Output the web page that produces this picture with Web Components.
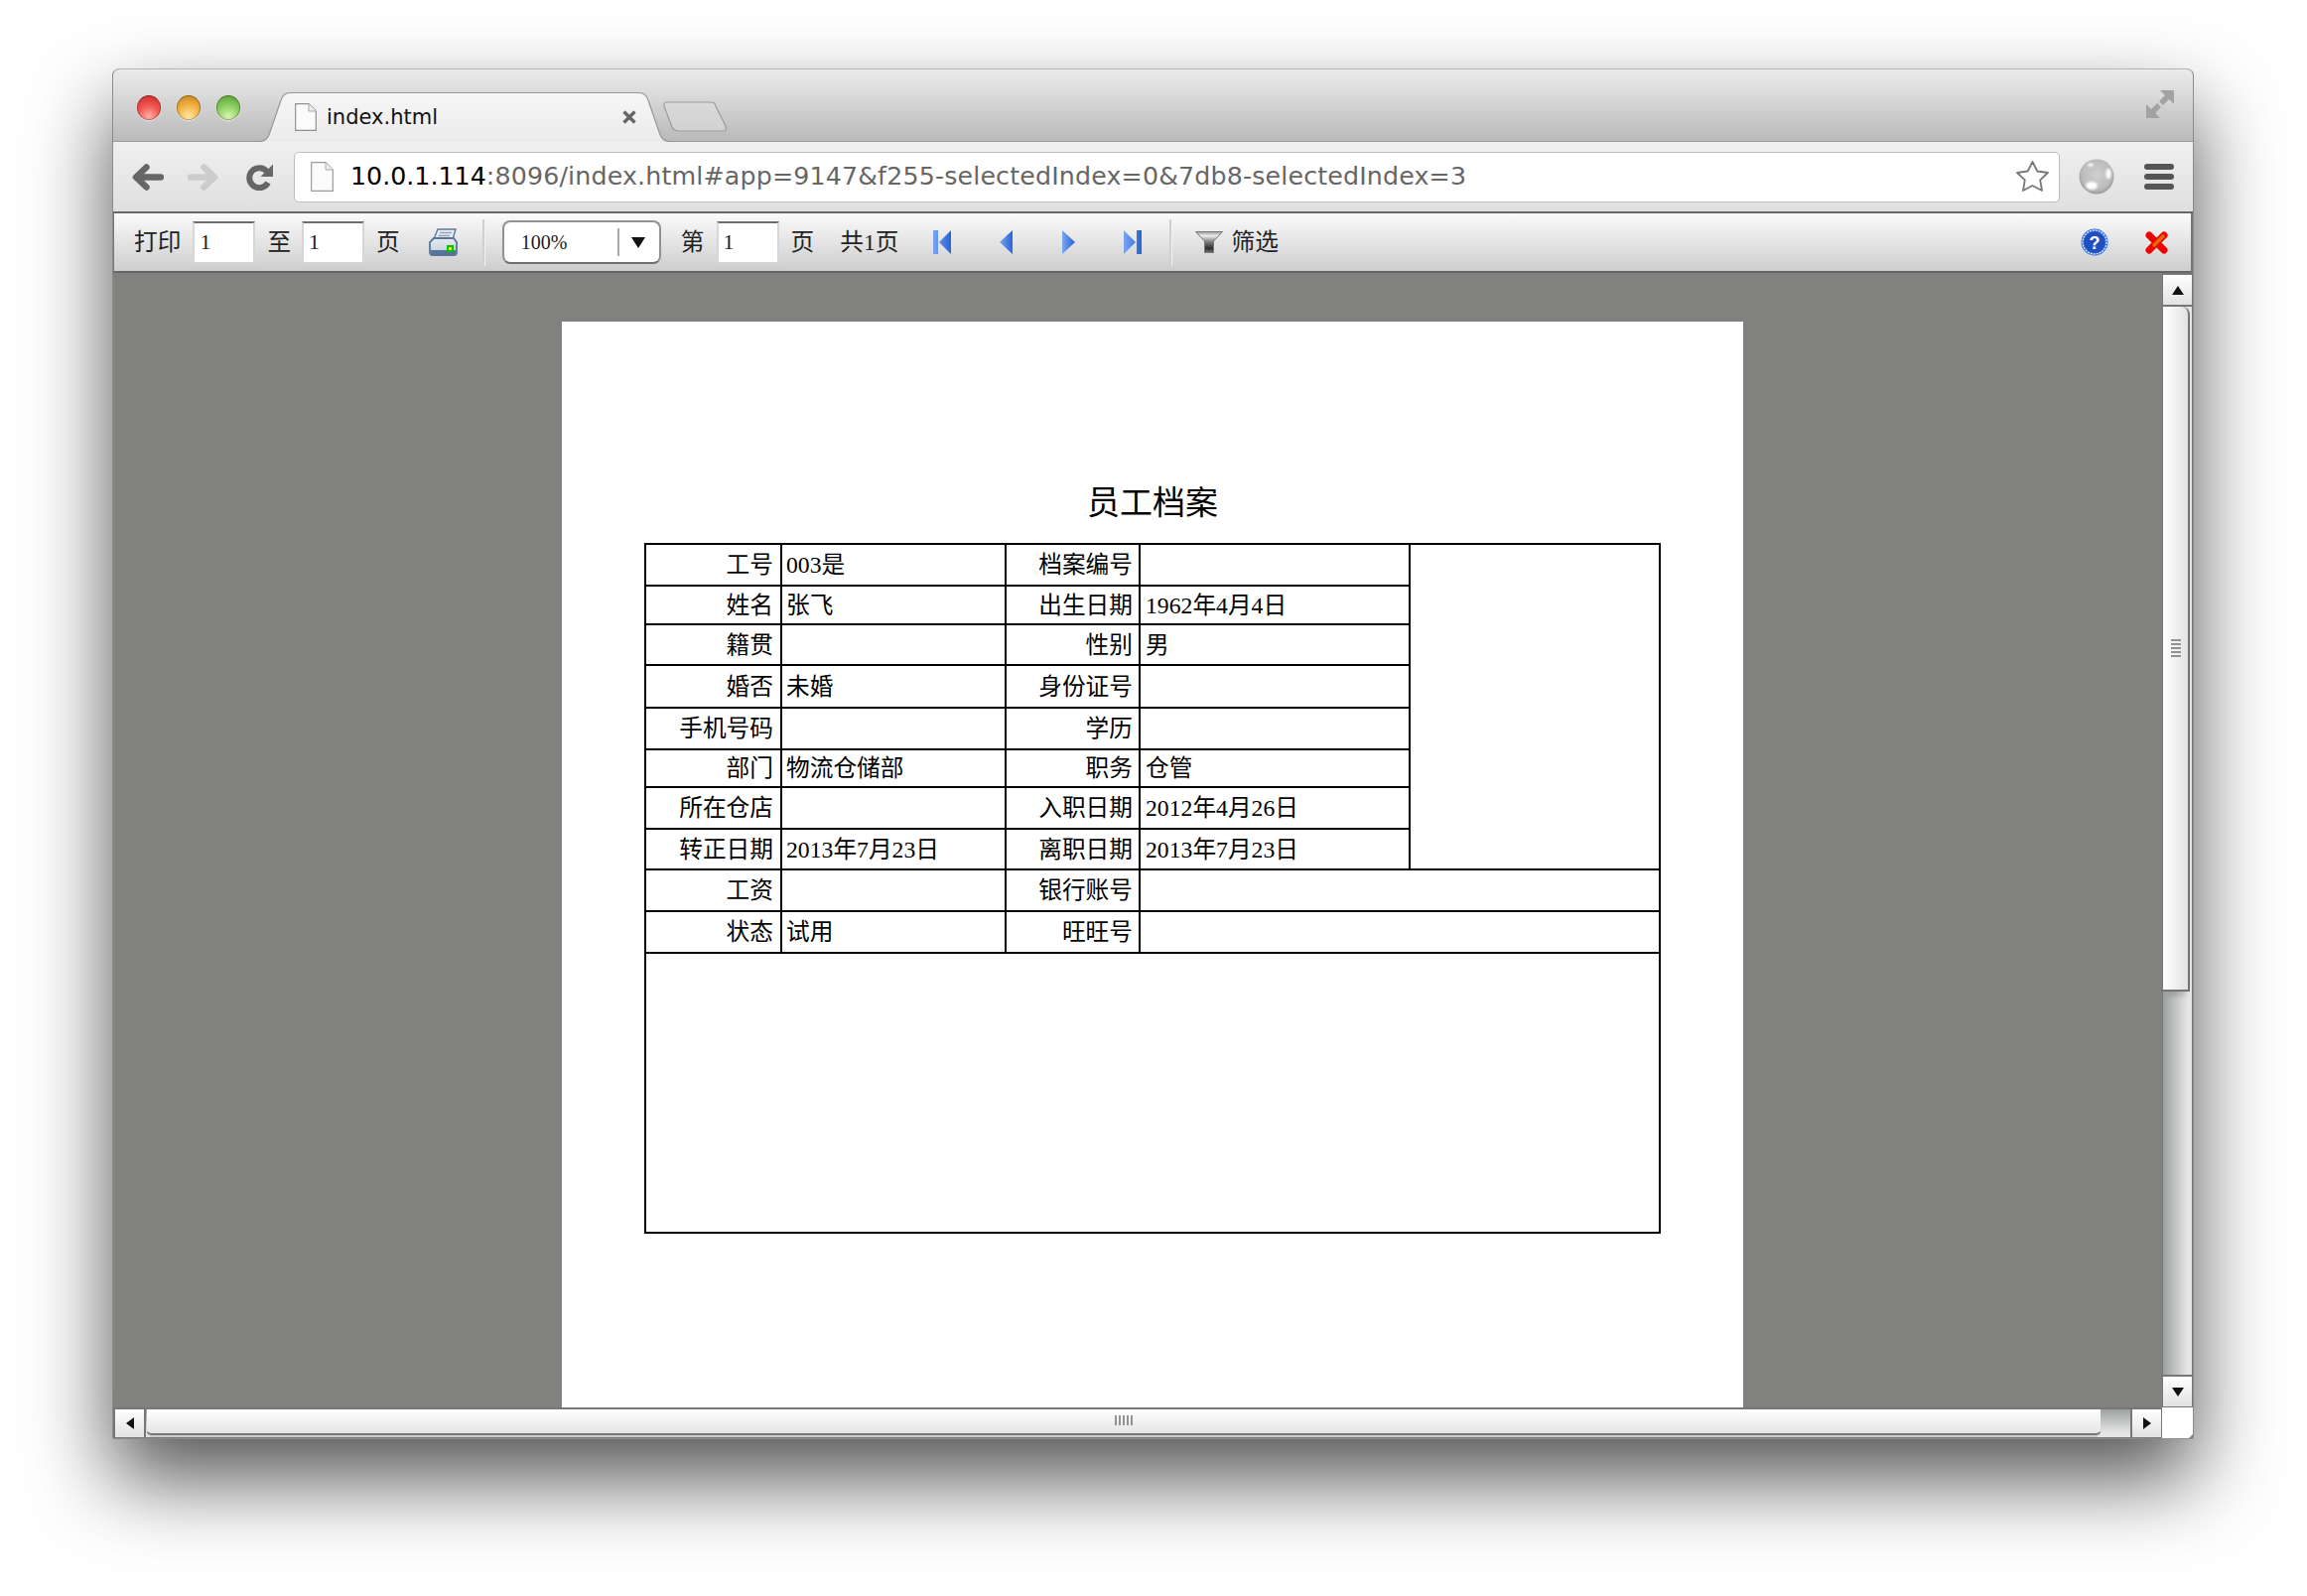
<!DOCTYPE html>
<html lang="zh">
<head>
<meta charset="utf-8">
<title>index.html</title>
<style>
    html, body {
        margin: 0;
        width: 2324px;
        height: 1608px;
        overflow: hidden;
        background: #fff;
    }
</style>
</head>
<body>
<browser-window>
    <tab-strip></tab-strip>
    <browser-bar></browser-bar>
    <report-bar></report-bar>
    <view-port>
        <report-page title-text="员工档案">
            <archive-table></archive-table>
        </report-page>
    </view-port>
</browser-window>

<script>
const SERIF_STACK = '"Liberation Serif", "Noto Sans CJK SC", serif';

class BrowserWindow extends HTMLElement {
    constructor() {
        super();
        this.attachShadow({ mode: 'open' });
        this.shadowRoot.innerHTML = `
            <style>
                :host {
                    display: flex;
                    flex-direction: column;
                    box-sizing: border-box;
                    width: 2097px;
                    height: 1381px;
                    margin: 69px 0 0 113px;
                    border: 1px solid #8c8c8c;
                    border-top-color: #b4b4b4;
                    border-radius: 7px 7px 3px 3px;
                    background: #777;
                    box-shadow: 0 40px 84px rgba(0, 0, 0, .68);
                    overflow: hidden;
                }
            </style>
            <slot></slot>
        `;
    }
}

class TabStrip extends HTMLElement {
    constructor() {
        super();
        this.attachShadow({ mode: 'open' });
        this.shadowRoot.innerHTML = `
            <style>
                :host {
                    display: flex;
                    align-items: flex-end;
                    flex: none;
                    height: 73px;
                    padding-left: 24px;
                    background: linear-gradient(#ebebeb, #b9b9b9);
                    box-shadow: inset 0 -1px #999;
                }
                .lights { display: flex; gap: 16px; align-self: flex-start; margin-top: 26px; }
                .light { width: 24px; height: 25px; border-radius: 50%; box-shadow: inset 0 0 0 1px rgba(0,0,0,.28), 0 1px 1px rgba(255,255,255,.6); }
                .red { background: radial-gradient(circle at 50% 85%, #ffb0a8 0, #f25650 45%, #c5242a 100%); }
                .amber { background: radial-gradient(circle at 50% 85%, #ffe6a0 0, #f0b040 50%, #bc7a14 100%); }
                .green { background: radial-gradient(circle at 50% 85%, #d6f5b0 0, #88cc5c 50%, #4c9630 100%); }
                .tab { position: relative; width: 416px; height: 50px; margin-left: 18px; flex: none; }
                .tab svg.shape { position: absolute; inset: 0; }
                .tab-inner { position: relative; display: flex; align-items: center; height: 50px; padding-left: 37px; }
                .title { margin-left: 10px; font: 21px/28px "DejaVu Sans", sans-serif; color: #111; }
                .close { margin-left: auto; margin-right: 34px; }
                .new-tab { flex: none; margin: 0 0 10px -8px; }
                .expand { align-self: flex-start; margin: 21px 19px 0 auto; }
            </style>
            <div class="lights">
                <div class="light red"></div><div class="light amber"></div><div class="light green"></div>
            </div>
            <div class="tab">
                <svg class="shape" width="416" height="50" viewBox="0 0 416 50">
                    <defs><linearGradient id="tabfill" x1="0" y1="0" x2="0" y2="1"><stop offset="0" stop-color="#f6f6f6"/><stop offset="1" stop-color="#ebebeb"/></linearGradient></defs>
                    <path d="M0 50C8 50 10 46 12 40L23 8C25 2 28 .5 34 .5H382C388 .5 391 2 393 8L404 40C406 46 408 50 416 50Z" fill="url(#tabfill)"/>
                    <path d="M0 49.5C8 49.5 10 46 12 40L23 8C25 2 28 .5 34 .5H382C388 .5 391 2 393 8L404 40C406 46 408 49.5 416 49.5" fill="none" stroke="#989898" stroke-width="1.2"/>
                </svg>
                <div class="tab-inner">
                    <svg width="22" height="28" viewBox="0 0 22 28"><path d="M.7.7H14L21.3 8V27.3H.7Z" fill="#fbfbfb" stroke="#8f8f8f" stroke-width="1.2"/><path d="M14 .7V8H21.3" fill="#eee" stroke="#a8a8a8"/></svg>
                    <span class="title">index.html</span>
                    <svg class="close" width="16" height="14" viewBox="0 0 16 14"><path d="M2.500 1.500L13.500 12.500M13.500 1.500L2.500 12.500" stroke="#666" stroke-width="3.400"/></svg>
                </div>
            </div>
            <svg class="new-tab" width="64" height="31" viewBox="0 0 64 31"><path d="M3.500 1H49Q52 1 53 5L63 25Q64.500 30 60 30H16Q11 30 9 26L1 5Q.5 1 3.500 1Z" fill="#dedede" fill-opacity=".55" stroke="#9c9c9c" stroke-width="1.2"/></svg>
            <svg class="expand" width="28" height="28" viewBox="0 0 28 28"><path d="M14 0H28V14L23 9L17 15L13 11L19 5ZM0 28H14L9 23L15 17L11 13L5 19L0 14Z" fill="#a2a2a2"/></svg>
        `;
    }
}

class BrowserBar extends HTMLElement {
    constructor() {
        super();
        this.attachShadow({ mode: 'open' });
        this.shadowRoot.innerHTML = `
            <style>
                :host {
                    display: flex;
                    align-items: center;
                    flex: none;
                    height: 70px;
                    padding: 0 19px;
                    background: linear-gradient(#f0f0f0, #dfdfdf);
                    border-bottom: 2px solid #666;
                }
                svg { flex: none; display: block; }
                .url {
                    flex: 1;
                    display: flex;
                    align-items: center;
                    box-sizing: border-box;
                    height: 51px;
                    margin: 0 19px 0 21px;
                    padding-left: 16px;
                    background: #fff;
                    border: 1px solid #bcbcbc;
                    border-radius: 5px;
                    font: 25.300px/30px "DejaVu Sans", sans-serif;
                    letter-spacing: .15px;
                    color: #666;
                    white-space: nowrap;
                }
                .host-part { color: #000; letter-spacing: 0; }
                .addr { margin-left: 17px; }
                .star { margin-left: auto; margin-right: 9px; }
            </style>
            <svg width="32" height="27" viewBox="0 0 32 27"><path d="M29 13.500H6M14.500 3.500L4 13.500L14.500 23.500" fill="none" stroke="#666" stroke-width="6.500" stroke-linecap="round" stroke-linejoin="round"/></svg>
            <svg style="margin-left:24px" width="31" height="27" viewBox="0 0 31 27"><path d="M3 13.500H25M16.500 3.500L27 13.500L16.500 23.500" fill="none" stroke="#ccc" stroke-width="6.500" stroke-linecap="round" stroke-linejoin="round"/></svg>
            <svg style="margin-left:28px" width="27" height="27" viewBox="0 0 27 27"><path d="M21.500 8.500A10 10 0 1 0 22 19" fill="none" stroke="#666" stroke-width="6"/><path d="M27 .5V13H14.500Z" fill="#666"/></svg>
            <div class="url">
                <svg width="23" height="30" viewBox="0 0 23 30"><path d="M.7.7H15L22.300 8V29.300H.7Z" fill="#fbfbfb" stroke="#9a9a9a" stroke-width="1.2"/><path d="M15 .7V8H22.300" fill="#eee" stroke="#aaa"/></svg>
                <span class="addr"><span class="host-part">10.0.1.114</span>:8096/index.html#app=9147&amp;f255-selectedIndex=0&amp;7db8-selectedIndex=3</span>
                <svg class="star" width="35" height="34" viewBox="0 0 35 34"><path d="M17.500 2L22.300 11.500L33 13L25.200 20.400L27 31L17.500 26L8 31L9.800 20.400L2 13L12.700 11.500Z" fill="#fff" stroke="#777" stroke-width="1.800" stroke-linejoin="round"/></svg>
            </div>
            <svg width="36" height="36" viewBox="0 0 36 36">
                <defs>
                    <radialGradient id="globe" cx=".5" cy=".45" r=".55"><stop offset="0" stop-color="#cfcfcf"/><stop offset=".75" stop-color="#bcbcbc"/><stop offset="1" stop-color="#9a9a9a"/></radialGradient>
                    <filter id="soft"><feGaussianBlur stdDeviation="1"/></filter>
                </defs>
                <circle cx="18" cy="18" r="17.500" fill="url(#globe)"/>
                <g fill="#fff" filter="url(#soft)"><ellipse cx="13" cy="27" rx="6" ry="4"/><ellipse cx="30" cy="15" rx="2.500" ry="5"/><ellipse cx="12" cy="6" rx="3" ry="1.500"/></g>
            </svg>
            <svg style="margin-left:30px" width="30" height="26" viewBox="0 0 30 26"><g fill="#555"><rect y="0" width="30" height="6" rx="3"/><rect y="10" width="30" height="6" rx="3"/><rect y="20" width="30" height="6" rx="3"/></g></svg>
        `;
    }
}

class NumField extends HTMLElement {
    constructor() {
        super();
        this.attachShadow({ mode: 'open' });
        this.shadowRoot.innerHTML = `
            <style>
                :host {
                    display: flex;
                    align-items: center;
                    flex: none;
                    box-sizing: border-box;
                    width: 63px;
                    height: 43px;
                    padding-left: 5px;
                    background: #fff;
                    border: 2px solid #d6d6d6;
                    border-top-color: #6e6e6e;
                    font-size: 22px;
                }
            </style>
            <slot></slot>
        `;
    }
}

class ReportBar extends HTMLElement {
    constructor() {
        super();
        this.attachShadow({ mode: 'open' });
        const gradId = 'navblue';
        this.shadowRoot.innerHTML = `
            <style>
                :host {
                    display: flex;
                    align-items: center;
                    flex: none;
                    height: 58px;
                    margin: 0 2px 0 1px;
                    padding: 0 23px 0 20px;
                    background: linear-gradient(#fbfbfb, #cdcdcd);
                    border-bottom: 2px solid #666;
                    font: 23.700px/30px ${SERIF_STACK};
                    color: #222;
                    white-space: nowrap;
                }
                svg { flex: none; display: block; }
                .sep { flex: none; width: 2px; height: 47px; background: #d0d0d0; box-shadow: 1px 0 #f2f2f2; }
                .zoom {
                    display: flex;
                    align-items: center;
                    flex: none;
                    box-sizing: border-box;
                    width: 160px;
                    height: 44px;
                    margin-left: 18px;
                    padding-left: 17px;
                    background: #fff;
                    border: 2px solid #929292;
                    border-bottom-color: #6f6f6f;
                    border-radius: 8px;
                    font-size: 20px;
                }
                .divider { width: 2px; height: 28px; margin-left: 51px; background: #aaa; }
                .arrow { margin-left: 12px; }
            </style>
            <span>打印</span>
            <num-field style="margin-left:12px">1</num-field>
            <span style="margin-left:12px">至</span>
            <num-field style="margin-left:11px">1</num-field>
            <span style="margin-left:12px">页</span>
            <svg style="margin-left:29px" width="29" height="28" viewBox="0 0 29 28">
                <defs>
                    <linearGradient id="prfront" x1="0" y1="0" x2="0" y2="1"><stop offset="0" stop-color="#e6ebf1"/><stop offset="1" stop-color="#c2ccd8"/></linearGradient>
                </defs>
                <path d="M9 1H27L24 11H5Z" fill="#e8ecf1" stroke="#5f7b9c" stroke-width="1.400"/>
                <path d="M11 4.500H23M9.500 7.500H21" stroke="#93a5ba" stroke-width="1.300"/>
                <path d="M5 10H25L28 14V24Q28 27 25 27H4Q1 27 1 24V14Z" fill="url(#prfront)" stroke="#5a7595" stroke-width="1.800"/>
                <path d="M2 22H27V25Q27 27 25 27H4Q2 27 2 25Z" fill="#56739a"/>
                <rect x="18" y="17" width="7" height="7" fill="#10b810"/>
                <rect x="20" y="19" width="3" height="3" fill="#c8ff20"/>
            </svg>
            <div class="sep" style="margin-left:25px"></div>
            <div class="zoom">
                <span>100%</span>
                <div class="divider"></div>
                <svg class="arrow" width="14" height="11" viewBox="0 0 14 11"><path d="M0 0H14L7 11Z" fill="#111"/></svg>
            </div>
            <span style="margin-left:20px">第</span>
            <num-field style="margin-left:12px">1</num-field>
            <span style="margin-left:12px">页</span>
            <span style="margin-left:26px">共1页</span>
            <svg style="margin-left:35px" width="18" height="24" viewBox="0 0 18 24">
                <defs><linearGradient id="${gradId}" x1="0" y1="0" x2="1" y2="0"><stop offset="0" stop-color="#7aa6f0"/><stop offset="1" stop-color="#2a62d6"/></linearGradient></defs>
                <path d="M0 0H5V24H0ZM18 0V24L6 12Z" fill="url(#${gradId})"/>
            </svg>
            <svg style="margin-left:49px" width="13" height="24" viewBox="0 0 13 24"><path d="M13 0V24L0 12Z" fill="url(#${gradId})"/></svg>
            <svg style="margin-left:50px" width="13" height="24" viewBox="0 0 13 24"><path d="M0 0V24L13 12Z" fill="url(#${gradId})"/></svg>
            <svg style="margin-left:49px" width="18" height="24" viewBox="0 0 18 24"><path d="M0 0V24L12 12ZM13 0H18V24H13Z" fill="url(#${gradId})"/></svg>
            <div class="sep" style="margin-left:28px"></div>
            <svg style="margin-left:24px" width="28" height="22" viewBox="0 0 28 22">
                <defs><linearGradient id="funnel" x1="0" y1="0" x2="0" y2="1"><stop offset="0" stop-color="#9c9c9c"/><stop offset=".2" stop-color="#ececec"/><stop offset=".5" stop-color="#777"/><stop offset=".8" stop-color="#2c2c2c"/><stop offset="1" stop-color="#777"/></linearGradient></defs>
                <path d="M.5.5H27.500L18.500 10V21.500H9.500V10Z" fill="url(#funnel)" stroke="#777"/>
            </svg>
            <span style="margin-left:8px">筛选</span>
            <svg style="margin-left:auto" width="28" height="28" viewBox="0 0 28 28">
                <circle cx="14" cy="14" r="13.500" fill="#2f66d8"/>
                <circle cx="14" cy="14" r="12" fill="none" stroke="#dfe9ff" stroke-width="1.400" stroke-dasharray="2 1"/>
                <circle cx="14" cy="14" r="10.500" fill="#1f4fc0"/>
                <text x="14" y="20.500" text-anchor="middle" font-family="Liberation Sans" font-weight="700" font-size="18" fill="#fff">?</text>
            </svg>
            <svg style="margin-left:37px" width="23" height="23" viewBox="0 0 23 23">
                <path d="M4 4L19 19" stroke="#f20000" stroke-width="7" stroke-linecap="round"/>
                <path d="M19 4L4 19" stroke="#f20000" stroke-width="7" stroke-linecap="round"/>
                <path d="M18 5L9 14" stroke="#e86a00" stroke-width="3.500" stroke-linecap="round"/>
            </svg>
        `;
    }
}

class ScrollBar extends HTMLElement {
    constructor() {
        super();
        this.attachShadow({ mode: 'open' });
        const horizontal = this.getAttribute('orient') === 'h';
        const first = horizontal ? 'M0 6L8 0V12Z' : 'M0 9L6 0L12 9Z';
        const last = horizontal ? 'M0 0L8 6L0 12Z' : 'M0 0H12L6 9Z';
        const iconW = horizontal ? 8 : 12;
        const iconH = horizontal ? 12 : 9;
        this.shadowRoot.innerHTML = `
            <style>
                :host {
                    display: flex;
                    flex: none;
                    background: #777;
                    box-sizing: border-box;
                }
                :host([orient="v"]) { flex-direction: column; width: 31px; height: 100%; padding: 2px 0 1px 1px; }
                :host([orient="h"]) { flex: 1; height: 31px; padding: 2px 1px 0 2px; align-items: flex-start; }
                .btn { display: flex; align-items: center; justify-content: center; flex: none; background: linear-gradient(#fff, #e2e2e2); }
                :host([orient="v"]) .btn { width: 29px; height: 30px; }
                :host([orient="h"]) .btn { width: 29px; height: 28px; }
                :host([orient="h"]) .btn:first-child { width: 28px; }
                .track { flex: 1; display: flex; min-width: 0; min-height: 0; }
                :host([orient="v"]) .track { flex-direction: column; margin: 2px 0; background: linear-gradient(90deg, #9da1a1, #e6e6e6 85%); width: 29px; }
                :host([orient="h"]) .track { margin: 0 2px; height: 28px; background: linear-gradient(#9da1a1, #e6e6e6 85%); }
                .thumb { display: flex; align-items: center; justify-content: center; box-sizing: border-box; }
                :host([orient="v"]) .thumb {
                    width: 27px; height: 690px;
                    background: linear-gradient(90deg, #fff, #e2e2e2);
                    border: solid #747474; border-width: 0 2px 2px 0;
                    border-radius: 0 8px 0 0;
                    box-shadow: 0 8px 6px -4px rgba(0,0,0,.18);
                }
                :host([orient="h"]) .thumb {
                    width: 1968px; height: 28px;
                    margin-left: 1px;
                    background: linear-gradient(#fff, #e2e2e2);
                    border-bottom: 2px solid #ccc;
                    box-shadow: inset 0 -2px #777;
                    border-radius: 0 0 5px 5px;
                }
                .grip { display: flex; gap: 2px; }
                :host([orient="v"]) .grip { flex-direction: column; }
                :host([orient="h"]) .grip { margin-top: -4px; }
                .grip i { display: block; background: #929292; }
                :host([orient="v"]) .grip i { width: 10px; height: 2px; }
                :host([orient="h"]) .grip i { width: 2px; height: 10px; }
            </style>
            <div class="btn"><svg width="${iconW}" height="${iconH}" viewBox="0 0 ${iconW} ${iconH}"><path d="${first}" fill="#111"/></svg></div>
            <div class="track">
                <div class="thumb"><div class="grip"><i></i><i></i><i></i><i></i><i></i></div></div>
            </div>
            <div class="btn"><svg width="${iconW}" height="${iconH}" viewBox="0 0 ${iconW} ${iconH}"><path d="${last}" fill="#111"/></svg></div>
        `;
    }
}

class ViewPort extends HTMLElement {
    constructor() {
        super();
        this.attachShadow({ mode: 'open' });
        this.shadowRoot.innerHTML = `
            <style>
                :host {
                    display: grid;
                    grid-template-columns: 1fr 31px;
                    grid-template-rows: 1fr 31px;
                    flex: 1;
                    min-height: 0;
                    background: #81817f;
                }
                .main { overflow: hidden; min-height: 0; }
                .bar-h { display: flex; grid-column: 1; }
                .corner { background: #fff; clip-path: polygon(0 0, 100% 0, 100% calc(100% - 4px), calc(100% - 4px) 100%, 0 100%); }
            </style>
            <div class="main"><slot></slot></div>
            <scroll-bar orient="v"></scroll-bar>
            <div class="bar-h"><scroll-bar orient="h"></scroll-bar></div>
            <div class="corner"></div>
        `;
    }
}

class ReportPage extends HTMLElement {
    constructor() {
        super();
        this.attachShadow({ mode: 'open' });
        this.shadowRoot.innerHTML = `
            <style>
                :host {
                    display: block;
                    box-sizing: border-box;
                    width: 1190px;
                    height: 1400px;
                    margin: 49px 0 0 452px;
                    padding: 163px 0 0 83px;
                    background: #fff;
                    font-family: ${SERIF_STACK};
                    color: #000;
                }
                h1 {
                    width: 1024px;
                    margin: 0 0 20px;
                    font-size: 33px;
                    font-weight: 400;
                    line-height: 40px;
                    text-align: center;
                }
            </style>
            <h1></h1>
            <slot></slot>
        `;
        this.shadowRoot.querySelector('h1').textContent = this.getAttribute('title-text');
    }
}

class ArchiveTable extends HTMLElement {
    constructor() {
        super();
        this.attachShadow({ mode: 'open' });
        const rows = [
            ['工号', '003是', '档案编号', ''],
            ['姓名', '张飞', '出生日期', '1962年4月4日'],
            ['籍贯', '', '性别', '男'],
            ['婚否', '未婚', '身份证号', ''],
            ['手机号码', '', '学历', ''],
            ['部门', '物流仓储部', '职务', '仓管'],
            ['所在仓店', '', '入职日期', '2012年4月26日'],
            ['转正日期', '2013年7月23日', '离职日期', '2013年7月23日'],
            ['工资', '', '银行账号', ''],
            ['状态', '试用', '旺旺号', '']
        ];
        const cells = rows.map((r, i) => {
            const wide = i >= 8 ? ' class="v wide"' : ' class="v"';
            const photo = i === 0 ? '<div class="photo"></div>' : '';
            return `<div class="l">${r[0]}</div><div class="v first">${r[1]}</div><div class="l second">${r[2]}</div><div${wide}>${r[3]}</div>${photo}`;
        }).join('');
        this.shadowRoot.innerHTML = `
            <style>
                :host {
                    display: grid;
                    grid-template-columns: 135px 224px 133px 270px 250px;
                    grid-template-rows: 40px 37px 39px 41px 40px 36px 40px 39px 40px 40px 280px;
                    gap: 2px;
                    width: max-content;
                    padding: 2px;
                    background: #000;
                    font-size: 23.700px;
                    line-height: 30px;
                }
                div { display: flex; align-items: center; background: #fff; white-space: nowrap; }
                .l { justify-content: flex-end; padding-right: 7px; }
                .l.second { padding-right: 6px; }
                .v { padding-left: 5px; }
                .v.first { padding-left: 4px; }
                .photo { grid-column: 5; grid-row: 1 / 9; }
                .wide { grid-column: 4 / 6; }
                .memo { grid-column: 1 / 6; }
            </style>
            ${cells}
            <div class="memo"></div>
        `;
    }
}

customElements.define('browser-window', BrowserWindow);
customElements.define('tab-strip', TabStrip);
customElements.define('browser-bar', BrowserBar);
customElements.define('num-field', NumField);
customElements.define('report-bar', ReportBar);
customElements.define('scroll-bar', ScrollBar);
customElements.define('view-port', ViewPort);
customElements.define('report-page', ReportPage);
customElements.define('archive-table', ArchiveTable);
</script>
</body>
</html>
